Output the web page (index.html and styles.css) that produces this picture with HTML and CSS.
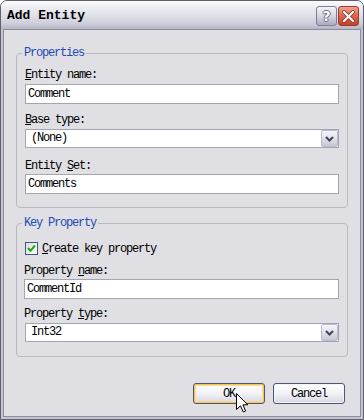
FILE: index.html
```html
<!DOCTYPE html>
<html lang="en">
<head>
    <meta charset="UTF-8">
    <title>Add Entity</title>
    <link rel="stylesheet" href="styles.css">
</head>
<body>

<div class="window">
    <div class="titlebar">
        <span class="title">Add Entity</span>
        <div class="caption-buttons">
            <span class="cap-btn help">?</span>
            <span class="cap-btn close">
                <svg width="13" height="13" viewBox="0 0 13 13">
                    <path d="M2 2 L11 11 M11 2 L2 11" stroke="#8a2a1a" stroke-width="3.6" stroke-linecap="square"/>
                    <path d="M2 2 L11 11 M11 2 L2 11" stroke="#ffffff" stroke-width="2.2" stroke-linecap="square"/>
                </svg>
            </span>
        </div>
    </div>

    <div class="client">
        <fieldset class="group group-props">
            <legend>Properties</legend>
            <div class="lbl first"><u>E</u>ntity name:</div>
            <div class="textbox">Comment</div>
            <div class="lbl"><u>B</u>ase type:</div>
            <div class="combo">
                <span class="combo-text">(None)</span>
                <span class="combo-btn">
                    <svg width="9" height="6" viewBox="0 0 9 6"><path d="M1 1 L4.5 4.5 L8 1" fill="none" stroke="#3c4660" stroke-width="2"/></svg>
                </span>
            </div>
            <div class="lbl lbl-set">Entity <u>S</u>et:</div>
            <div class="textbox tb-set">Comments</div>
        </fieldset>

        <fieldset class="group group-key">
            <legend>Key Property</legend>
            <div class="check-row">
                <span class="checkbox">
                    <svg width="9" height="9" viewBox="0 0 9 9"><path d="M1 4 L3.5 6.8 L8 1.5" fill="none" stroke="#21a121" stroke-width="2"/></svg>
                </span>
                <span><u>C</u>reate key property</span>
            </div>
            <div class="lbl lbl-pname">Property <u>n</u>ame:</div>
            <div class="textbox tb-pname">CommentId</div>
            <div class="lbl lbl-ptype">Property <u>t</u>ype:</div>
            <div class="combo">
                <span class="combo-text">Int32</span>
                <span class="combo-btn">
                    <svg width="9" height="6" viewBox="0 0 9 6"><path d="M1 1 L4.5 4.5 L8 1" fill="none" stroke="#3c4660" stroke-width="2"/></svg>
                </span>
            </div>
        </fieldset>

        <div class="actions">
            <button class="btn btn-default">OK</button>
            <button class="btn">Cancel</button>
        </div>
    </div>

    <!-- mouse pointer over the OK button -->
    <svg class="pointer" width="13" height="20" viewBox="0 0 13 20">
        <path d="M0.5 0.5 L0.5 16.5 L4.5 12.8 L7.3 19 L9.6 18 L6.9 11.8 L11.8 11.8 Z" fill="#ffffff" stroke="#000000" stroke-width="1"/>
    </svg>
</div>

</body>
</html>
```

FILE: styles.css
```css
body {
    margin: 0;
    background-color: #ffffff;
    font-family: "Liberation Mono", monospace;
    font-size: 12px;
    letter-spacing: -1.2px;
    color: #000000;
}
.window {
    position: relative;
    width: 364px;
    height: 420px;
    box-sizing: border-box;
    border: 1px solid #5f5f6e;
    border-radius: 7px 7px 0 0;
    background-color: #c4c4d2;
    display: flex;
    flex-direction: column;
    overflow: hidden;
}
.titlebar {
    height: 28px;
    flex: none;
    display: flex;
    align-items: center;
    justify-content: space-between;
    padding: 0 4px 0 6px;
    background: linear-gradient(#fdfdff 0%, #ececf2 25%, #dedee7 55%, #cfcfdb 80%, #b4b4c6 100%);
}
.title {
    font-size: 13px;
    font-weight: bold;
    letter-spacing: 0;
    padding-top: 1px;
}
.caption-buttons {
    display: flex;
    gap: 1px;
    margin-top: 2px;
}
.cap-btn {
    width: 21px;
    height: 20px;
    box-sizing: border-box;
    border-radius: 3px;
    display: flex;
    align-items: center;
    justify-content: center;
}
.help {
    border: 1px solid #7c7e93;
    background: linear-gradient(#f4f4f9 0%, #d6d7e3 50%, #a9abbf 100%);
    color: #ffffff;
    font-family: "DejaVu Sans", sans-serif;
    font-weight: bold;
    font-size: 14px;
    letter-spacing: 0;
    text-shadow: 1px 0 #6b6d82, -1px 0 #6b6d82, 0 1px #6b6d82, 0 -1px #6b6d82;
}
.close {
    border: 1px solid #9c3b2c;
    background: linear-gradient(#f0a590 0%, #de6a52 45%, #c4402a 100%);
}
.client {
    flex: 1;
    margin: 0 2px 2px;
    border: 1px solid #8c8c9b;
    background-color: #e0dfe3;
    padding: 17px 12px 0;
}
.group {
    margin: 0;
    padding: 0 8px 13px;
    border: 1px solid #b9b9c2;
    border-radius: 4px;
}
.group legend {
    padding: 0 2px;
    margin-left: -3px;
    line-height: 12px;
    color: #1c4cb4;
}
.group-key {
    margin-top: 9px;
    padding-bottom: 14px;
}
.lbl {
    line-height: 12px;
    margin-top: 10px;
    margin-bottom: 3px;
}
.lbl-set {
    margin-top: 12px;
    margin-bottom: 2px;
}
.lbl-pname {
    margin-top: 10px;
    margin-bottom: 2px;
    margin-left: -1px;
}
.lbl-ptype {
    margin-top: 9px;
    margin-left: -1px;
}
.textbox {
    height: 20px;
    box-sizing: border-box;
    border: 1px solid #a2a6b0;
    background-color: #ffffff;
    padding-left: 2px;
    line-height: 18px;
}
.tb-pname {
    margin-left: -1px;
}
.combo {
    height: 19px;
    box-sizing: border-box;
    border: 1px solid #a2a6b0;
    background-color: #ffffff;
    display: flex;
    align-items: center;
    justify-content: space-between;
    padding-left: 5px;
}
.combo-text {
    line-height: 17px;
}
.combo-btn {
    width: 17px;
    height: 17px;
    box-sizing: border-box;
    border: 1px solid #b9bccb;
    border-radius: 2px;
    background: linear-gradient(#f6f6f9 0%, #dcdce6 60%, #c6c7d5 100%);
    display: flex;
    align-items: center;
    justify-content: center;
}
.check-row {
    margin-top: 13px;
    height: 13px;
    display: flex;
    align-items: center;
    gap: 4px;
}
.checkbox {
    width: 13px;
    height: 13px;
    box-sizing: border-box;
    border: 1px solid #3d5a78;
    background: linear-gradient(135deg, #dcdcd6 0%, #ffffff 100%);
    display: flex;
    align-items: center;
    justify-content: center;
}
.actions {
    margin-top: 26px;
    display: flex;
    justify-content: flex-end;
    gap: 8px;
    padding-right: 3px;
}
.btn {
    width: 72px;
    height: 21px;
    margin: 0;
    padding: 0;
    box-sizing: border-box;
    border: 1px solid #4c5670;
    border-radius: 3px;
    background: linear-gradient(#ffffff 0%, #f2f2f6 50%, #dcdde6 90%, #c8cad8 100%);
    box-shadow: inset 0 0 0 1px #f4f4f8;
    font-family: "Liberation Mono", monospace;
    font-size: 12px;
    letter-spacing: -1.2px;
    color: #000000;
}
.btn-default {
    box-shadow: inset 0 0 0 1px #f7c45a, inset 0 0 0 2px #fbdc98;
}
.pointer {
    position: absolute;
    left: 235px;
    top: 392px;
}
```
